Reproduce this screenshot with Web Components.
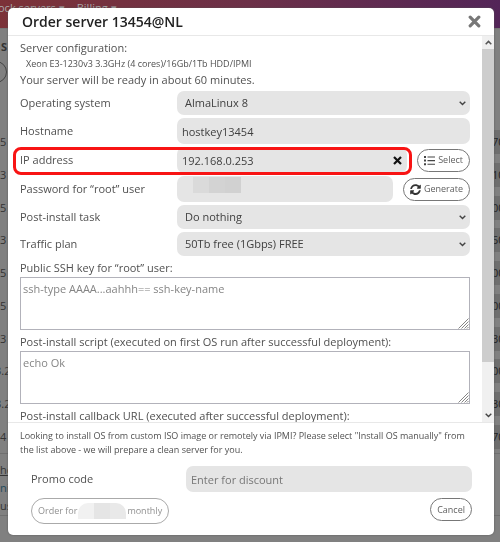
<!DOCTYPE html>
<html lang="en">
<head>
<meta charset="utf-8">
<meta name="viewport" content="width=device-width, initial-scale=1">
<title>Order server</title>
<style>
	body {
		margin: 0;
		height: 100vh;
		overflow: hidden;
		background: #808080;
		color: #505050;
		font: 11px/16px "Open Sans", "Noto Sans", sans-serif;
	}
	.spec {
		padding-left: 6px;
		font-size: 9px;
	}
</style>
</head>
<body>

<server-list></server-list>

<order-dialog heading="Order server 13454@NL">
	<div slot="info">Server configuration:</div>
	<div slot="info" class="spec">Xeon E3-1230v3 3.3GHz (4 cores)/16Gb/1Tb HDD/IPMI</div>
	<div slot="info">Your server will be ready in about 60 minutes.</div>

	<form-row kind="select" label="Operating system" value="AlmaLinux 8"></form-row>
	<form-row kind="text" label="Hostname" value="hostkey13454"></form-row>
	<form-row kind="text" label="IP address" value="192.168.0.253" clearable marked>
		<pill-button slot="action" icon="list">Select</pill-button>
	</form-row>
	<form-row kind="text" label="Password for “root” user" masked>
		<pill-button slot="action" icon="sync">Generate</pill-button>
	</form-row>
	<form-row kind="select" label="Post-install task" value="Do nothing"></form-row>
	<form-row kind="select" label="Traffic plan" value="50Tb free (1Gbps) FREE"></form-row>
	<text-block label="Public SSH key for “root” user:" hint="ssh-type AAAA...aahhh== ssh-key-name"></text-block>
	<text-block label="Post-install script (executed on first OS run after successful deployment):" hint="echo Ok"></text-block>
	<text-block label="Post-install callback URL (executed after successful deployment):"></text-block>

	<order-footer slot="footer"></order-footer>
</order-dialog>

<script>
const ICONS = {
	close: `<svg width="13" height="13" viewBox="0 0 13 13"><path d="M2.2 2.2l8.6 8.6M10.8 2.2l-8.6 8.6" stroke="#777" stroke-width="3.2" stroke-linecap="round"/></svg>`,
	clear: `<svg width="9" height="9" viewBox="0 0 9 9"><path d="M1 1l7 7M8 1L1 8" stroke="#111" stroke-width="2.2"/></svg>`,
	list: `<svg width="11" height="11" viewBox="0 0 11 11" fill="#444"><path d="M0 1h2v2H0zM0 4.6h2v2H0zM0 8.2h2v2H0zM3.5 1.5H11v1.1H3.5zM3.5 5.1H11v1.1H3.5zM3.5 8.7H11v1.1H3.5z"/></svg>`,
	sync: `<svg width="11" height="11" viewBox="0 0 512 512" fill="#333"><path d="M371 141c-32-30-72-46-115-46-78 0-145 53-163 127-1 5-6 9-12 9H24c-8 0-14-7-12-14C33 102 134 8 256 8c66 0 127 26 171 69l35-35c15-15 42-4 42 17v134c0 13-11 24-24 24H346c-21 0-32-26-17-41l42-35zM32 295h134c21 0 32 26 17 41l-41 41c31 30 71 46 114 46 78 0 145-53 163-127 1-5 6-9 12-9h57c8 0 14 7 12 14-21 115-122 209-244 209-66 0-127-26-171-69l-35 35c-15 15-42 4-42-17V319c0-13 11-24 24-24z"/></svg>`,
	down: `<svg width="7" height="5" viewBox="0 0 7 5"><path d="M.7 .8l2.8 2.8L6.3 .8" fill="none" stroke="#444" stroke-width="1.4"/></svg>`,
	up: `<svg width="7" height="5" viewBox="0 0 7 5"><path d="M.7 4.2l2.8-2.8 2.8 2.8" fill="none" stroke="#555" stroke-width="1.5"/></svg>`,
	grip: `<svg width="11" height="11" viewBox="0 0 11 11"><path d="M.5 10.5l10-10M3.5 10.5l7-7M6.5 10.5l4-4M9 10.5l1.5-1.5" stroke="#777" stroke-width=".9"/></svg>`
};

/* page behind the dialog, dimmed */
class ServerList extends HTMLElement {
	constructor() {
		super();
		const ids = ['5', '3', '5', '3', '5', '5', '3', '3.2', '3.2', '4'];
		const prices = ['70', '10', '00', '50', '00', '00', '30', '00', '30', '70'];
		const rows = ids.map((id, i) => `<div class="row"><span class="${id.length > 1 ? 'long' : ''}">${id}</span><span class="price">${prices[i]}</span></div>`).join('');
		this.attachShadow({mode: 'open'}).innerHTML = `
			<style>
			:host {
				display: block;
				color: #333;
			}
			nav {
				height: 28px;
				box-sizing: border-box;
				background: linear-gradient(90deg, #7c3238, #6c3048 50%, #532558);
				color: #aaa;
				display: flex;
				gap: 12px;
				margin-left: -2px;
				white-space: nowrap;
			}
			.bar {
				height: 98px;
				box-sizing: border-box;
				border-top: 1px solid #777;
				padding-top: 10px;
			}
			.bar b {
				display: block;
				padding-left: 1px;
			}
			.round {
				width: 22px;
				height: 22px;
				box-sizing: border-box;
				border: 1px solid #444;
				border-radius: 50%;
				margin: 6px 0 0 -15px;
			}
			.rows {
				display: grid;
				grid-auto-rows: 1fr;
				height: 327px;
				border-bottom: 1px solid #6f6f6f;
			}
			.row {
				display: flex;
				align-items: center;
				justify-content: space-between;
			}
			.long {
				margin-left: -5px;
			}
			.price {
				background: #6e6e6e;
				line-height: 24px;
				width: 6px;
				text-indent: -2px;
				overflow: hidden;
				color: #222;
			}
			.notes {
				padding-top: 7px;
				line-height: 18px;
				border-bottom: 1px solid #6f6f6f;
			}
			.notes div:nth-child(1) {
				text-decoration: underline;
			}
			.notes div:nth-child(2) {
				color: #244a5c;
			}
			</style>
			<nav><span>ock servers ▾</span><span>Billing ▾</span></nav>
			<div class="bar"><b>S</b><div class="round"></div></div>
			<div class="rows">${rows}</div>
			<div class="notes"><div>he</div><div>nin</div><div>us</div></div>`;
	}
}

class PillButton extends HTMLElement {
	constructor() {
		super();
		this.attachShadow({mode: 'open'}).innerHTML = `
			<style>
			:host {
				display: block;
			}
			button {
				display: flex;
				align-items: center;
				gap: 3px;
				height: 23px;
				box-sizing: border-box;
				padding: 0 6px;
				border: 1px solid #777;
				border-radius: 12px;
				background: #fff;
				color: #606060;
				font: inherit;
				font-size: 9px;
				white-space: nowrap;
			}
			:host([large]) button {
				gap: 1px;
				height: 26px;
				border-color: #aaa;
				border-radius: 13px;
				color: #909090;
			}
			</style>
			<button type="button">${ICONS[this.getAttribute('icon')] || ''}<slot></slot></button>`;
	}
}

/* blurred-out value */
class MosaicPatch extends HTMLElement {
	constructor() {
		super();
		this.attachShadow({mode: 'open'}).innerHTML = `
			<style>
			:host {
				display: grid;
				grid-template-columns: repeat(3, 16px);
				grid-template-rows: 16px;
			}
			i:nth-of-type(1) { background: #dadada; }
			i:nth-of-type(2) { background: #d3d3d3; }
			i:nth-of-type(3) { background: #d1d1d1; }
			:host([light]) {
				border-radius: 10px 10px 0 0;
				overflow: hidden;
			}
			:host([light]) i:nth-of-type(1) { background: #f1f1f1; }
			:host([light]) i:nth-of-type(2) { background: #e5e5e5; }
			:host([light]) i:nth-of-type(3) { background: #e9e9e9; }
			</style>
			<i></i><i></i><i></i>`;
	}
}

class FormRow extends HTMLElement {
	constructor() {
		super();
		const label = this.getAttribute('label');
		const value = this.getAttribute('value') || '';
		const hint = this.getAttribute('hint') || '';
		const select = this.getAttribute('kind') === 'select';
		const control = select
			? `<select id="control"><option>${value}</option></select>${ICONS.down}`
			: `<input id="control" type="text" value="${value}" placeholder="${hint}">`;
		this.attachShadow({mode: 'open'}).innerHTML = `
			<style>
			:host {
				display: grid;
				grid-template-columns: var(--label-width, 157px) minmax(0, 1fr) auto;
				align-items: center;
				position: relative;
			}
			.field {
				position: relative;
				display: flex;
				align-items: center;
			}
			input, select {
				appearance: none;
				width: 100%;
				height: 26px;
				box-sizing: border-box;
				margin: 0;
				border: 0;
				border-radius: 7px;
				padding: 0 5px;
				background: #e5e5e5;
				color: #404040;
				font: inherit;
			}
			select {
				height: 24px;
				padding: 0 8px;
			}
			input::placeholder {
				color: #777;
			}
			.field > svg, .field > button {
				position: absolute;
				right: 4px;
			}
			.field > button {
				display: flex;
				border: 0;
				padding: 0;
				background: none;
				right: 5px;
			}
			mosaic-patch {
				position: absolute;
				left: 16px;
				top: 1px;
			}
			::slotted([slot=action]) {
				margin-left: 10px;
			}
			.mark {
				position: absolute;
				inset: 0 58px -2px -7px;
				border: 3px solid #f81414;
				border-radius: 8px;
				pointer-events: none;
			}
			</style>
			<label for="control">${label}</label>
			<div class="field">
				${control}
				${this.hasAttribute('clearable') ? `<button type="button" aria-label="Clear">${ICONS.clear}</button>` : ''}
				${this.hasAttribute('masked') ? '<mosaic-patch></mosaic-patch>' : ''}
			</div>
			<slot name="action"></slot>
			${this.hasAttribute('marked') ? '<div class="mark"></div>' : ''}`;
	}
}

class TextBlock extends HTMLElement {
	constructor() {
		super();
		this.attachShadow({mode: 'open'}).innerHTML = `
			<style>
			:host {
				display: block;
				position: relative;
			}
			label {
				display: block;
				line-height: 18px;
			}
			textarea {
				display: block;
				width: 100%;
				height: 53px;
				box-sizing: border-box;
				margin: 0;
				padding: 3px 2px;
				border: 1px solid #b2b2ba;
				resize: none;
				background: #fff;
				color: #404040;
				font: inherit;
			}
			textarea::placeholder {
				color: #858585;
			}
			svg {
				position: absolute;
				right: 1px;
				bottom: 1px;
			}
			</style>
			<label for="area">${this.getAttribute('label')}</label>
			<textarea id="area" placeholder="${this.getAttribute('hint') || ''}"></textarea>
			${ICONS.grip}`;
	}
}

class OrderFooter extends HTMLElement {
	constructor() {
		super();
		this.attachShadow({mode: 'open'}).innerHTML = `
			<style>
			:host {
				display: block;
				border-top: 1px solid #e8e8e8;
				padding: 6px 22px 11px 12px;
			}
			p {
				margin: 0 0 9px;
				font-size: 9px;
				line-height: 14px;
			}
			form-row {
				--label-width: 155px;
				margin-left: 11px;
			}
			.buttons {
				display: flex;
				justify-content: space-between;
				align-items: flex-start;
				margin: 6px 0 0 11px;
			}
			</style>
			<p>Looking to install OS from custom ISO image or remotely via IPMI? Please select "Install OS manually" from the list above - we will prepare a clean server for you.</p>
			<form-row kind="text" label="Promo code" hint="Enter for discount"></form-row>
			<div class="buttons">
				<pill-button large>Order for<mosaic-patch light></mosaic-patch>monthly</pill-button>
				<pill-button>Cancel</pill-button>
			</div>`;
	}
}

class OrderDialog extends HTMLElement {
	constructor() {
		super();
		this.attachShadow({mode: 'open'}).innerHTML = `
			<style>
			:host {
				position: fixed;
				inset: 8px 6px 7px 8px;
				display: flex;
				flex-direction: column;
				border-radius: 5px;
				background: #fff;
				box-shadow: 0 0 2px #555;
			}
			header {
				display: flex;
				align-items: center;
				justify-content: space-between;
				height: 27px;
				padding: 0 13px 0 14px;
				border-bottom: 1px solid #e8e8e8;
			}
			h1 {
				margin: 0;
				color: #222;
				font-size: 14px;
				line-height: 20px;
				font-weight: 600;
			}
			header button {
				display: flex;
				border: 0;
				padding: 0;
				background: none;
			}
			.body {
				flex: 1;
				min-height: 0;
				display: grid;
				grid-template-columns: minmax(0, 1fr) 12px;
				grid-template-rows: minmax(0, 1fr);
			}
			.content {
				overflow: hidden;
				display: flex;
				flex-direction: column;
				gap: 3px;
				padding: 4px 12px 0;
			}
			.content > *, ::slotted(*) {
				flex: none;
			}
			.scroll {
				display: flex;
				flex-direction: column;
				background: #f0f0f0;
			}
			.scroll span {
				height: 13px;
				display: flex;
				align-items: center;
				justify-content: center;
			}
			.track {
				flex: 1;
			}
			.thumb {
				height: 87%;
				background: #cdcdcd;
			}
			</style>
			<header>
				<h1>${this.getAttribute('heading')}</h1>
				<button type="button" aria-label="Close">${ICONS.close}</button>
			</header>
			<div class="body">
				<div class="content">
					<div><slot name="info"></slot></div>
					<slot></slot>
				</div>
				<div class="scroll"><span>${ICONS.up}</span><div class="track"><div class="thumb"></div></div><span>${ICONS.down}</span></div>
			</div>
			<slot name="footer"></slot>`;
	}
}

customElements.define('server-list', ServerList);
customElements.define('mosaic-patch', MosaicPatch);
customElements.define('pill-button', PillButton);
customElements.define('form-row', FormRow);
customElements.define('text-block', TextBlock);
customElements.define('order-footer', OrderFooter);
customElements.define('order-dialog', OrderDialog);
</script>
</body>
</html>
